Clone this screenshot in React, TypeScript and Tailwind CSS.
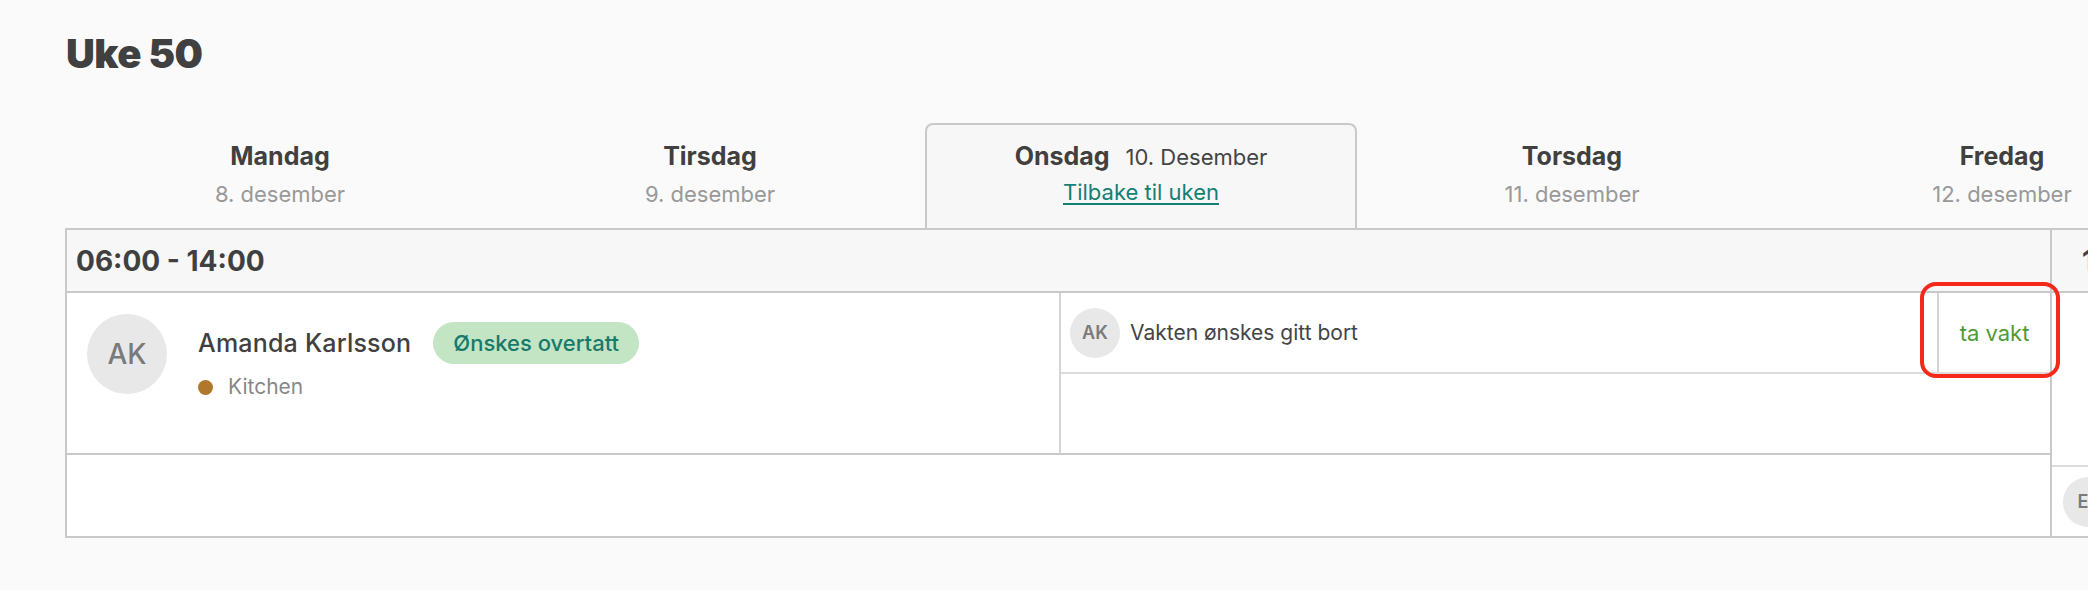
import React from "react";

const days = [
  { name: "Mandag", date: "8. desember" },
  { name: "Tirsdag", date: "9. desember" },
  { name: "Onsdag", date: "10. Desember", active: true },
  { name: "Torsdag", date: "11. desember" },
  { name: "Fredag", date: "12. desember" },
];

function Avatar({ initials, size }: { initials: string; size: "lg" | "sm" }) {
  return (
    <div
      className={
        size === "lg"
          ? "flex h-[80px] w-[80px] shrink-0 items-center justify-center rounded-full bg-[#e8e8e8] text-[28px] font-medium text-[#7a7a7a]"
          : "flex h-[50px] w-[50px] shrink-0 items-center justify-center rounded-full bg-[#e8e8e8] text-[18px] font-semibold text-[#7a7a7a]"
      }
    >
      {initials}
    </div>
  );
}

export default function App() {
  return (
    <div className="relative h-[590px] w-[2088px] overflow-hidden bg-[#fafafa] font-['Inter',sans-serif] text-[#404040]">
      <div className="pl-[65px]">
        {/* Title */}
        <h1 className="pl-[1px] pt-[30px] text-[40px] font-black leading-[48px] tracking-[-0.5px]">Uke 50</h1>

        {/* Day tabs */}
        <div className="mt-[45px] flex h-[105px] w-max">
          {days.map((d) =>
            d.active ? (
              <div
                key={d.name}
                className="flex w-[432px] flex-col items-center rounded-t-[8px] border-2 border-b-0 border-[#c9c9c9] bg-[#f7f7f7] pt-[15px]"
              >
                <div className="flex items-baseline">
                  <span className="text-[25px] font-bold leading-[32px]">{d.name}</span>
                  <span className="ml-[16px] text-[22px] leading-[32px] text-[#444]">{d.date}</span>
                </div>
                <a className="mt-[5px] text-[22px] leading-[28px] text-[#137f73] underline decoration-[2px] underline-offset-[3px]">
                  Tilbake til uken
                </a>
              </div>
            ) : (
              <div key={d.name} className="flex w-[430px] flex-col items-center pt-[17px]">
                <span className="text-[25px] font-bold leading-[32px]">{d.name}</span>
                <span className="mt-[8px] text-[22px] leading-[28px] text-[#999]">{d.date}</span>
              </div>
            )
          )}
        </div>

        {/* Shift tables */}
        <div className="flex w-max">
          <div className="w-[1987px] border-2 border-[#c9c9c9] bg-white">
            <div className="flex h-[63px] items-center border-b-2 border-[#c9c9c9] bg-[#f7f7f7] px-[9px] text-[28px] font-bold leading-[36px]">
              06:00 - 14:00
            </div>

            <div className="flex h-[162px] border-b-2 border-[#c9c9c9]">
              <div className="flex w-[994px] items-start gap-[31px] border-r-2 border-[#d4d4d4] pl-[20px] pt-[21px]">
                <Avatar initials="AK" size="lg" />
                <div className="mt-[8px] flex flex-col">
                  <div className="flex items-center gap-[22px]">
                    <span className="text-[25px] font-medium leading-[32px] tracking-[0.2px]">Amanda Karlsson</span>
                    <span className="flex h-[42px] items-center rounded-full bg-[#c4e5c4] px-[20px] text-[22px] font-medium text-[#177a6c]">
                      Ønskes overtatt
                    </span>
                  </div>
                  <div className="mt-[9px] flex items-center gap-[15px]">
                    <span className="h-[15px] w-[15px] rounded-full bg-[#b0782c]" />
                    <span className="text-[21px] leading-[28px] text-[#888]">Kitchen</span>
                  </div>
                </div>
              </div>

              <div className="flex flex-1 flex-col">
                <div className="flex h-[81px] border-b-2 border-[#dcdcdc]">
                  <div className="flex flex-1 items-center gap-[10px] pl-[9px]">
                    <Avatar initials="AK" size="sm" />
                    <span className="text-[21px] leading-[28px] text-[#444]">Vakten ønskes gitt bort</span>
                  </div>
                  <div className="flex w-[113px] items-center justify-center border-l-2 border-[#d4d4d4] text-[22px] leading-[28px] text-[#4f9a35]">
                    ta vakt
                  </div>
                </div>
              </div>
            </div>

            <div className="h-[81px]" />
          </div>

          {/* Next day, cut off at the edge */}
          <div className="w-[320px] border-y-2 border-[#c9c9c9] bg-white">
            <div className="flex h-[63px] items-center whitespace-nowrap border-b-2 border-[#c9c9c9] bg-[#f7f7f7] pl-[30px] text-[28px] font-bold leading-[36px]">
              14:00 - 22:00
            </div>
            <div className="h-[174px] border-b-2 border-[#dcdcdc]" />
            <div className="flex h-[69px] items-center pl-[11px]">
              <Avatar initials="EL" size="sm" />
            </div>
          </div>
        </div>
      </div>

      {/* Highlight around the action */}
      <div className="absolute left-[1920px] top-[282px] h-[96px] w-[140px] rounded-[16px] border-[4px] border-[#f5281a]" />
    </div>
  );
}
